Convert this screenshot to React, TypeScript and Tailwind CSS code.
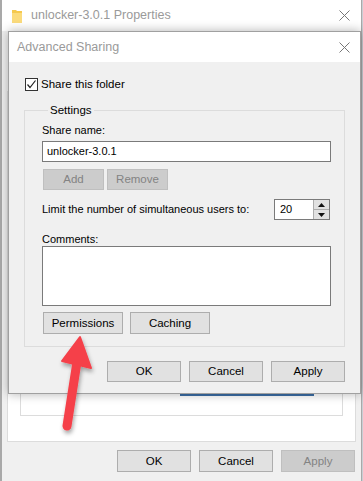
import React from "react";

const font = { fontFamily: '"Liberation Sans", Arial, sans-serif' };

function WinButton({ label, disabled, className = "" }: { label: string; disabled?: boolean; className?: string }) {
  return (
    <div
      className={`flex items-center justify-center border text-[11.5px] ${
        disabled ? "bg-[#cccccc] border-[#bfbfbf] text-[#838383]" : "bg-[#e1e1e1] border-[#adadad] text-black"
      } ${className}`}
    >
      {label}
    </div>
  );
}

function CloseX() {
  return (
    <svg width="11" height="11" viewBox="0 0 11 11">
      <path d="M0.5 0.5 L10.5 10.5 M10.5 0.5 L0.5 10.5" stroke="#777" strokeWidth="1" />
    </svg>
  );
}

export default function App() {
  return (
    <div className="relative w-[363px] h-[481px] overflow-hidden bg-[#c9ced4] text-[11px] leading-[15px]" style={font}>
      {/* Properties window (behind) */}
      <div className="absolute left-0 top-0 w-[362px] h-[481px] flex flex-col border-l-2 border-r border-[#a9a9a9] bg-[#f0f0f0]">
        <div className="h-[31px] shrink-0 bg-white flex items-center pl-[10px] pr-[10px]">
          <svg width="10" height="14" viewBox="0 0 10 14">
            <path d="M0 1 L4 1 L5 2 L10 2 L10 14 L0 14 Z" fill="#f5c94f" />
            <path d="M0 4 L10 4 L10 14 L0 14 Z" fill="#fbdb7c" />
          </svg>
          <span className="ml-[9px] text-[12.5px] text-[#9a9a9a]">unlocker-3.0.1 Properties</span>
          <div className="ml-auto mr-[1px]">
            <CloseX />
          </div>
        </div>
        <div className="flex-1 flex flex-col px-[5px]">
          <div className="flex-1 mt-[60px] bg-white border border-[#dcdcdc] flex flex-col justify-end px-[12px] pb-[25px]">
            <div className="h-[90px] border border-[#dcdcdc] pt-[58px]">
              <div className="ml-[159px] w-[134px] h-[11px] border-b-2 border-[#3b6ea6]" />
            </div>
          </div>
          <div className="flex justify-end gap-[8px] mt-[8px] mb-[9px] pr-[1px]">
            <WinButton label="OK" className="w-[74px] h-[22px]" />
            <WinButton label="Cancel" className="w-[74px] h-[22px]" />
            <WinButton label="Apply" disabled className="w-[74px] h-[22px]" />
          </div>
        </div>
      </div>

      {/* Advanced Sharing dialog */}
      <div className="absolute left-[8px] top-[31px] w-[353px] h-[363px] flex flex-col border border-[#a0a0a0] bg-[#f0f0f0] shadow-[0_0_10px_rgba(0,0,0,0.3)]">
        <div className="h-[30px] shrink-0 bg-white flex items-center pl-[8px] pr-[10px]">
          <span className="text-[12.5px] text-[#9a9a9a]">Advanced Sharing</span>
          <div className="ml-auto">
            <CloseX />
          </div>
        </div>
        <div className="flex-1 flex flex-col pt-[16px] px-[15px]">
          <div className="flex items-center h-[13px] pl-[1px]">
            <div className="w-[13px] h-[13px] border border-[#333] bg-white flex items-center justify-center">
              <svg width="11" height="11" viewBox="0 0 11 11">
                <path d="M1.5 5.5 L4 8.5 L9.5 1.5" stroke="#222" strokeWidth="1.2" fill="none" />
              </svg>
            </div>
            <span className="ml-[3px] text-[11.5px] text-black">Share this folder</span>
          </div>

          <fieldset className="mt-[12px] border border-[#dcdcdc] pl-[17px] pr-[13px] pb-[12px] flex flex-col">
            <legend className="ml-[6px] px-[2px] text-[11.5px] text-black">Settings</legend>
            <div className="mt-[5px] text-black">Share name:</div>
            <div className="mt-[3px] h-[21px] border border-[#7a7a7a] bg-white flex items-center px-[4px] text-black">
              unlocker-3.0.1
            </div>
            <div className="mt-[7px] flex gap-[3px] pl-[1px]">
              <WinButton label="Add" disabled className="w-[61px] h-[21px]" />
              <WinButton label="Remove" disabled className="w-[61px] h-[21px]" />
            </div>
            <div className="mt-[9px] flex items-center justify-between h-[21px]">
              <span className="text-black">Limit the number of simultaneous users to:</span>
              <div className="w-[56px] h-[21px] mr-[1px] border border-[#7a7a7a] bg-white flex">
                <div className="flex-1 flex items-center pl-[5px] text-black">20</div>
                <div className="w-[16px] flex flex-col border-l border-[#adadad]">
                  <div className="flex-1 bg-[#e1e1e1] border-b border-[#adadad] flex items-center justify-center">
                    <svg width="7" height="4" viewBox="0 0 7 4">
                      <path d="M3.5 0 L7 4 L0 4 Z" fill="#111" />
                    </svg>
                  </div>
                  <div className="flex-1 bg-[#e1e1e1] flex items-center justify-center">
                    <svg width="7" height="4" viewBox="0 0 7 4">
                      <path d="M0 0 L7 0 L3.5 4 Z" fill="#111" />
                    </svg>
                  </div>
                </div>
              </div>
            </div>
            <div className="mt-[12px] h-[14px] text-black">Comments:</div>
            <div className="h-[60px] border border-[#7a7a7a] bg-white" />
            <div className="mt-[6px] flex gap-[7px] pl-[1px]">
              <WinButton label="Permissions" className="w-[80px] h-[22px]" />
              <WinButton label="Caching" className="w-[80px] h-[22px]" />
            </div>
          </fieldset>

          <div className="mt-[14px] flex justify-end gap-[8px]">
            <WinButton label="OK" className="w-[74px] h-[21px]" />
            <WinButton label="Cancel" className="w-[74px] h-[21px]" />
            <WinButton label="Apply" className="w-[74px] h-[21px]" />
          </div>
        </div>
      </div>

      {/* Red annotation arrow */}
      <svg className="absolute left-0 top-0 pointer-events-none" width="363" height="481" viewBox="0 0 363 481">
        <defs>
          <filter id="sh" x="-50%" y="-50%" width="200%" height="200%">
            <feDropShadow dx="1" dy="3" stdDeviation="2" floodColor="#000" floodOpacity="0.35" />
          </filter>
        </defs>
        <g filter="url(#sh)" fill="#f5404a" stroke="#f5404a" strokeLinejoin="round">
          <path d="M80 337 L91 368 L62 361 Z" strokeWidth="2" />
          <path d="M77 362 L67 426" strokeWidth="9" strokeLinecap="round" fill="none" />
        </g>
      </svg>
    </div>
  );
}
